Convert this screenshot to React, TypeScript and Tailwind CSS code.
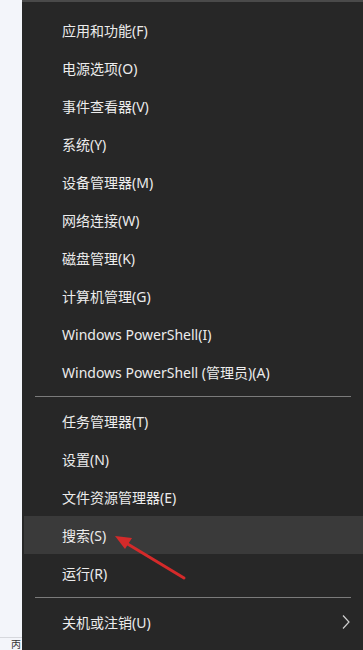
import React from 'react'

type Item = { label: string; active?: boolean; submenu?: boolean }

const GROUPS: Item[][] = [
  [
    { label: '应用和功能(F)' },
    { label: '电源选项(O)' },
    { label: '事件查看器(V)' },
    { label: '系统(Y)' },
    { label: '设备管理器(M)' },
    { label: '网络连接(W)' },
    { label: '磁盘管理(K)' },
    { label: '计算机管理(G)' },
    { label: 'Windows PowerShell(I)' },
    { label: 'Windows PowerShell (管理员)(A)' },
  ],
  [
    { label: '任务管理器(T)' },
    { label: '设置(N)' },
    { label: '文件资源管理器(E)' },
    { label: '搜索(S)', active: true },
    { label: '运行(R)' },
  ],
  [{ label: '关机或注销(U)', submenu: true }],
]

function Row({ item }: { item: Item }) {
  return (
    <div
      className={`flex h-[38px] items-center justify-between pl-[38px] pr-[12px] ${
        item.active ? 'bg-[#3a3a3a]' : ''
      }`}
    >
      <span className="text-[14px] text-[#ececec]">{item.label}</span>
      {item.submenu && (
        <svg width="10" height="16" viewBox="0 0 10 16" fill="none">
          <path d="M2 1.5 L8 8 L2 14.5" stroke="#cfcfcf" strokeWidth="1.2" />
        </svg>
      )}
    </div>
  )
}

export default function App() {
  return (
    <div
      className="relative flex h-[650px] w-[363px] overflow-hidden"
      style={{ fontFamily: '"Noto Sans", "Noto Sans CJK SC", sans-serif' }}
    >
      {/* background window peeking on the left */}
      <div className="flex w-[22px] flex-col justify-end bg-[#f3f5fa]">
        <div className="h-[13px] border-t border-[#d6d8dd] pl-[11px] text-[10px] leading-[12px] text-[#333]">
          丙
        </div>
      </div>

      {/* context menu */}
      <div className="flex flex-1 flex-col border-t-2 border-[#4a4a4a] bg-[#272727] pt-[9px] pl-[2px]">
        {GROUPS.map((group, gi) => (
          <div key={gi}>
            {gi > 0 && (
              <div className="flex h-[11px] items-center pl-[11px] pr-[12px]">
                <div className="h-px w-full bg-[#7b7b7b]" />
              </div>
            )}
            {group.map(item => (
              <Row key={item.label} item={item} />
            ))}
          </div>
        ))}
      </div>

      {/* red annotation arrow */}
      <svg
        className="pointer-events-none absolute left-0 top-0"
        width="363"
        height="650"
        viewBox="0 0 363 650"
      >
        <line x1="184" y1="578" x2="126" y2="543" stroke="#d42a2a" strokeWidth="3" strokeLinecap="round" />
        <polygon points="115,536 132,538 125,549" fill="#d42a2a" />
      </svg>
    </div>
  )
}
